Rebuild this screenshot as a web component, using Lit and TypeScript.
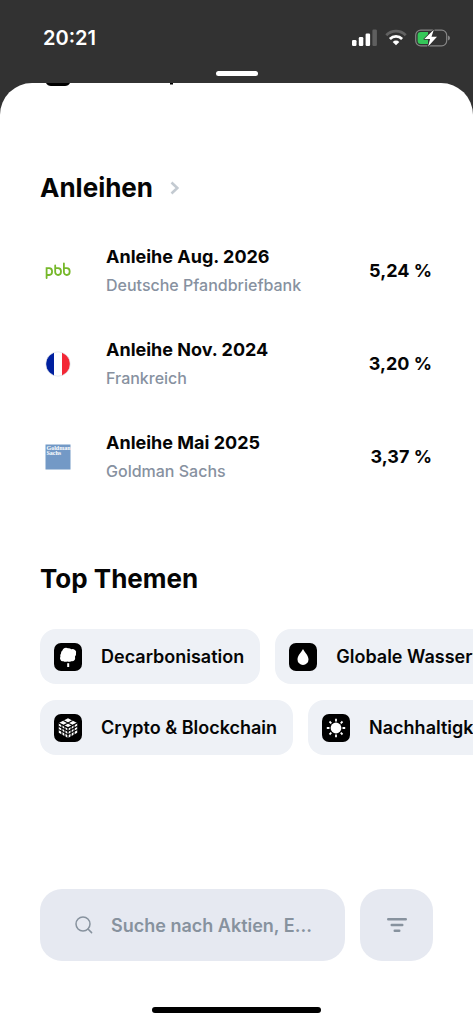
import { LitElement, html, svg, css } from "lit";
import { customElement } from "lit/decorators.js";

const pbbLogo = svg`
  <svg viewBox="0 0 26 26" width="26" height="26" aria-hidden="true" fill="none" stroke="#76b82a" stroke-width="1.8" stroke-linecap="round">
    <path d="M1.600 20V10.200h2.600a2.900 3.400 0 0 1 0 6.800H2" />
    <path d="M10.200 7.500V14a2.900 3 0 0 0 2.900 3a2.900 3.400 0 0 0 0-6.800H11" />
    <path d="M18.900 5.500V14a2.900 3 0 0 0 2.900 3a2.900 3.400 0 0 0 0-6.800H19.700" />
  </svg>`;

const franceFlag = svg`
  <svg viewBox="0 0 26 26" width="26" height="26" aria-hidden="true">
    <clipPath id="flag"><circle cx="13" cy="13" r="12" /></clipPath>
    <g clip-path="url(#flag)">
      <rect width="26" height="26" fill="#fff" />
      <rect width="9" height="26" fill="#00209f" />
      <rect x="17" width="9" height="26" fill="#f32735" />
    </g>
    <circle cx="13" cy="13" r="12.2" fill="none" stroke="#d9dce2" stroke-width=".6" />
  </svg>`;

const goldmanLogo = svg`
  <svg viewBox="0 0 26 26" width="26" height="26" aria-hidden="true">
    <rect x=".5" y=".5" width="25" height="25" fill="#7399c6" />
    <g fill="#fff" font-family="'Liberation Serif', serif" font-weight="700" font-size="6">
      <text x="1.5" y="6.4">Goldman</text>
      <text x="1.5" y="11.4">Sachs</text>
    </g>
  </svg>`;

const treeIcon = svg`
  <svg viewBox="0 0 28 28" width="28" height="28" aria-hidden="true">
    <rect width="28" height="28" rx="7" />
    <path fill="#fff" d="M10.600 5Q12.400 4.200 14 5.300Q16 5 17.200 6.200Q19.600 5.800 21.200 7.200Q22.600 8.200 22 10.200Q22.400 12 21 13.400Q21.400 15.600 20.600 17Q19.400 18.600 17.200 18.200Q15.200 19.200 13.400 18.400Q11 19.200 9.400 18.200Q7.200 18.600 6.600 17Q5.400 15.400 6.400 13.600Q5.800 11.600 7 10.400Q6.800 8.400 8.400 7.400Q8.800 5.600 10.600 5Z" />
    <path fill="#fff" d="M13.200 20.200h2V24h-2z" />
  </svg>`;

const dropIcon = svg`
  <svg viewBox="0 0 28 28" width="28" height="28" aria-hidden="true">
    <rect width="28" height="28" rx="7" />
    <path fill="#fff" d="M14 6C15.200 8.600 19.500 12.600 19.500 16.400a5.500 5.500 0 0 1-11 0C8.500 12.600 12.800 8.600 14 6Z" />
  </svg>`;

const cubeIcon = svg`
  <svg viewBox="0 0 28 28" width="28" height="28" aria-hidden="true">
    <rect width="28" height="28" rx="7" />
    <path fill="#fff" d="M14 4.200L23.200 9V18.800L14 24L4.800 18.800V9Z" />
    <g fill="none" stroke="#000" stroke-width="1.100">
      <path d="M4.800 9L14 13.900L23.200 9M14 13.900V24" stroke-width="1.300" />
      <path d="M9.400 6.600L18.600 11.400M18.600 6.600L9.400 11.400" />
      <path d="M7.900 10.600V21M10.900 12.200V23M17.100 12.200V23M20.100 10.600V21" />
      <path d="M4.500 12.300L14 17.300L23.500 12.300M4.500 15.600L14 20.700L23.500 15.600" />
    </g>
  </svg>`;

const sunIcon = svg`
  <svg viewBox="0 0 28 28" width="28" height="28" aria-hidden="true">
    <rect width="28" height="28" rx="7" />
    <circle cx="14" cy="14" r="5.400" fill="#fff" />
    <path stroke="#fff" stroke-width="1.800" fill="none" d="M14 4.800v2.700M14 20.500v2.700M4.800 14h2.700M20.500 14h2.700M7.500 7.500l1.800 1.800M18.700 18.700l1.800 1.800M7.500 20.500l1.800-1.800M18.700 9.300l1.800-1.800" />
  </svg>`;

const bonds = [
  { logo: pbbLogo, title: "Anleihe Aug. 2026", issuer: "Deutsche Pfandbriefbank", rate: "5,24 %" },
  { logo: franceFlag, title: "Anleihe Nov. 2024", issuer: "Frankreich", rate: "3,20 %" },
  { logo: goldmanLogo, title: "Anleihe Mai 2025", issuer: "Goldman Sachs", rate: "3,37 %" },
];

const topics = [
  [
    { icon: treeIcon, label: "Decarbonisation" },
    { icon: dropIcon, label: "Globale Wasserversorgung" },
  ],
  [
    { icon: cubeIcon, label: "Crypto & Blockchain" },
    { icon: sunIcon, label: "Nachhaltigkeit" },
  ],
];

@customElement("app-root")
export class AppRoot extends LitElement {
  static styles = css`
    :host {
      display: flex;
      flex-direction: column;
      min-height: 100vh;
      overflow: hidden;
      background: #323232;
      color: #050505;
      font-family: Inter, "Liberation Sans", sans-serif;
    }
    * { box-sizing: border-box; }
    svg { display: block; flex: none; }
    h2, p, ul { margin: 0; padding: 0; }
    ul { list-style: none; }
    button, input { font: inherit; color: inherit; border: 0; }
    button { padding: 0; background: none; cursor: pointer; }

    .status {
      display: flex;
      justify-content: space-between;
      align-items: center;
      height: 71px;
      padding: 4px 23px 0 43px;
      color: #fff;
      font-size: 20px;
      font-weight: 600;
    }
    .signals { display: flex; align-items: center; gap: 8px; }
    .grabber {
      width: 42px;
      height: 5px;
      margin: 0 auto 7px;
      border-radius: 3px;
      background: #fff;
    }
    .sheet {
      flex: 1;
      display: flex;
      flex-direction: column;
      border-radius: 32px 32px 0 0;
      background: #fff;
      overflow: hidden;
    }
    .peek { height: 88px; padding-left: 46px; }
    .heading {
      display: flex;
      align-items: center;
      padding: 0 40px;
      font-size: 26px;
      line-height: 34px;
      font-weight: 700;
    }
    .heading-link {
      display: flex;
      align-items: center;
      gap: 17px;
      color: inherit;
      text-decoration: none;
    }
    .bonds { padding: 19px 41px 0 40px; }
    .bond { display: flex; align-items: center; height: 93px; }
    .logo { display: flex; justify-content: center; width: 36px; margin-right: 30px; }
    .names { flex: 1; min-width: 0; }
    .title { font-size: 18px; line-height: 29px; font-weight: 700; }
    .issuer { font-size: 16px; line-height: 29px; font-weight: 500; color: #8791a0; }
    .rate { font-size: 18px; font-weight: 700; }
    .themes { padding-top: 59px; }
    .chips { display: flex; flex-direction: column; gap: 16px; padding: 33px 0 0 40px; }
    .chip-row { display: flex; gap: 15px; }
    .chip {
      display: flex;
      align-items: center;
      flex: none;
      gap: 19px;
      height: 55px;
      padding: 0 16px 0 14px;
      border-radius: 16px;
      background: #eef1f6;
      font-size: 18px;
      font-weight: 600;
      white-space: nowrap;
    }
    .search-bar {
      display: flex;
      gap: 15px;
      margin-top: auto;
      padding: 40px 40px 46px;
      color: #87929e;
    }
    .search {
      flex: 1;
      min-width: 0;
      display: flex;
      align-items: center;
      gap: 18px;
      height: 72px;
      padding: 0 30px 0 35px;
      border-radius: 22px;
      background: #e6e9f1;
    }
    .field {
      flex: 1;
      min-width: 0;
      padding: 0;
      background: none;
      outline: none;
      font-size: 18px;
      font-weight: 600;
    }
    .field::placeholder { color: inherit; opacity: 1; }
    .filter {
      display: flex;
      align-items: center;
      justify-content: center;
      width: 73px;
      height: 72px;
      border-radius: 22px;
      background: #e6e9f1;
    }
    .home {
      width: 169px;
      height: 6px;
      margin: 0 auto 11px;
      border-radius: 3px;
      background: #000;
    }
  `;

  render() {
    return html`
      <header class="status">
        <time>20:21</time>
        <div class="signals">
          <svg viewBox="0 0 25 17" width="25" height="17" role="img" aria-label="Mobilfunk" fill="#fff">
            <rect y="11" width="4.500" height="6" rx="1.200" />
            <rect x="6.800" y="8" width="4.500" height="9" rx="1.200" />
            <rect x="13.600" y="4.500" width="4.500" height="12.500" rx="1.200" />
            <rect x="20.400" y="0.500" width="4.500" height="16.500" rx="1.200" fill="#5f5f5f" />
          </svg>
          <svg viewBox="0 0 22 17" width="22" height="17" role="img" aria-label="WLAN" fill="none" stroke-width="2.800">
            <path stroke="#626262" d="M1.300 6.200a13.800 13.800 0 0 1 19.400 0" />
            <path stroke="#fff" d="M4.900 9.900a8.700 8.700 0 0 1 12.200 0" />
            <path fill="#fff" d="M11 16.200L7.700 12.900a4.700 4.700 0 0 1 6.600 0Z" />
          </svg>
          <svg viewBox="0 0 35 18" width="35" height="18" role="img" aria-label="Batterie wird geladen">
            <rect x=".7" y="1.200" width="31" height="15.600" rx="5" fill="none" stroke="#858585" stroke-width="1.200" />
            <path d="M33 6.500q2 .8 2 2.500t-2 2.500z" fill="#858585" />
            <path d="M5.800 3H13v12H5.800Q2.600 15 2.600 12V6Q2.600 3 5.800 3Z" fill="#35c759" />
            <path d="M18.800.8L9.300 10h5.800l-2 7.500L22 7.800h-5.500Z" fill="#fff" stroke="#323232" stroke-width="1.600" stroke-linejoin="round" paint-order="stroke" />
          </svg>
        </div>
      </header>
      <div class="grabber"></div>

      <main class="sheet">
        <div class="peek">
          <svg viewBox="0 0 130 4" width="130" height="4" aria-hidden="true">
            <path d="M0 0h24q-1.500 3-5 3H5Q1.500 3 0 0Z" />
            <path d="M124 0h3v1.500h-3z" />
          </svg>
        </div>

        <section>
          <h2 class="heading">
            <a class="heading-link" href="#anleihen">
              Anleihen
              <svg viewBox="0 0 10 14" width="10" height="14" aria-hidden="true" fill="none" stroke="#c3cad1" stroke-width="2.600">
                <path d="M1.500 1.500L7.300 7L1.500 12.500" />
              </svg>
            </a>
          </h2>
          <ul class="bonds">
            ${bonds.map(
              (b) => html`<li class="bond">
                <span class="logo">${b.logo}</span>
                <div class="names">
                  <p class="title">${b.title}</p>
                  <p class="issuer">${b.issuer}</p>
                </div>
                <span class="rate">${b.rate}</span>
              </li>`
            )}
          </ul>
        </section>

        <section class="themes">
          <h2 class="heading">Top Themen</h2>
          <div class="chips">
            ${topics.map(
              (row) => html`<div class="chip-row">
                ${row.map((t) => html`<button class="chip" type="button">${t.icon}<span>${t.label}</span></button>`)}
              </div>`
            )}
          </div>
        </section>

        <div class="search-bar">
          <label class="search">
            <svg viewBox="0 0 18 18" width="18" height="18" aria-hidden="true" fill="none" stroke="currentColor" stroke-width="1.500" stroke-linecap="round">
              <circle cx="8" cy="8" r="7" />
              <path d="M13 13l3.600 3.600" />
            </svg>
            <input class="field" type="text" aria-label="Suche" placeholder="Suche nach Aktien, E..." />
          </label>
          <button class="filter" type="button" aria-label="Filter">
            <svg viewBox="0 0 20 14" width="20" height="14" aria-hidden="true" fill="none" stroke="currentColor" stroke-width="2.400" stroke-linecap="round">
              <path d="M1.200 1.300h17.600M4.700 7h10.600M7.700 12.700h4.600" />
            </svg>
          </button>
        </div>
        <div class="home"></div>
      </main>
    `;
  }
}
